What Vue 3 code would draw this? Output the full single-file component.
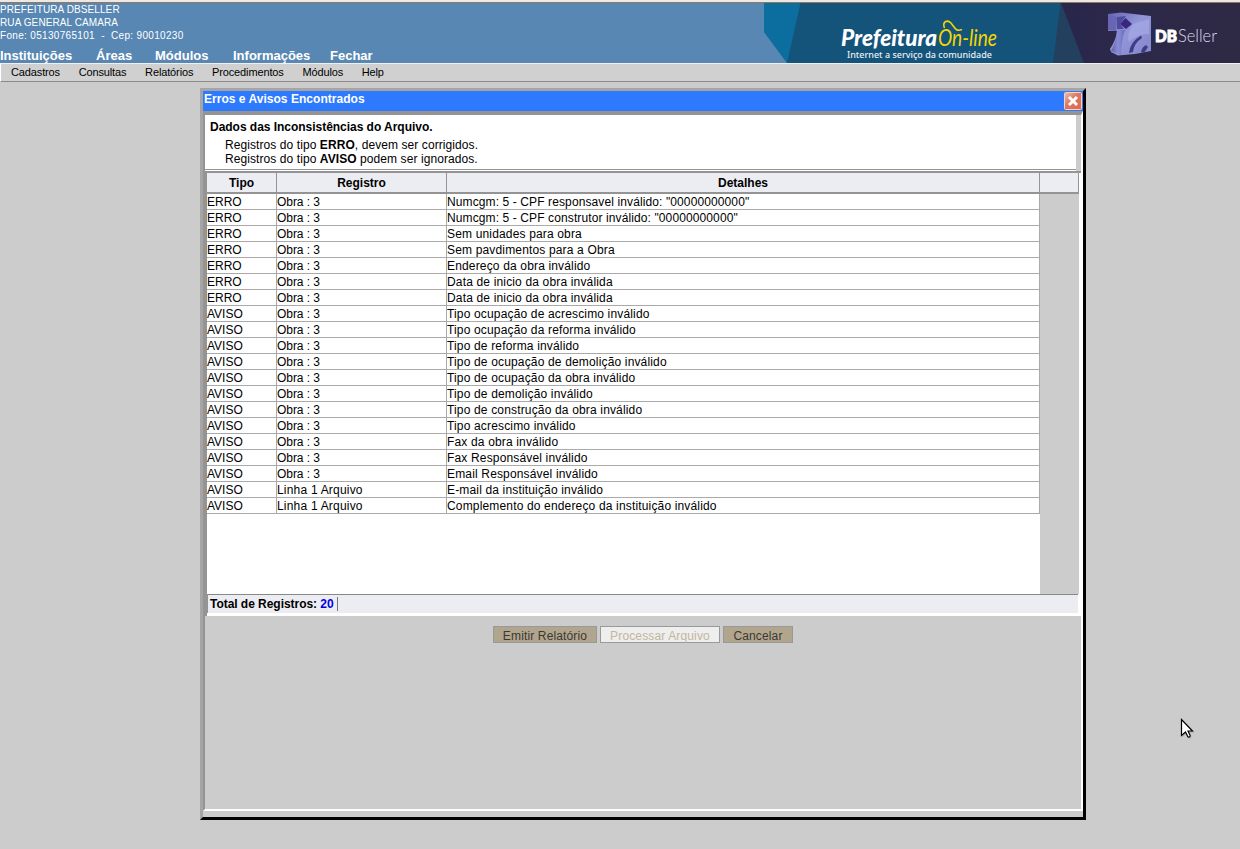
<script setup>
const modules = [
  { t: 'Instituições', x: 0 }, { t: 'Áreas', x: 96 }, { t: 'Módulos', x: 155 },
  { t: 'Informações', x: 233 }, { t: 'Fechar', x: 330 }
]
const menu = ['Cadastros', 'Consultas', 'Relatórios', 'Procedimentos', 'Módulos', 'Help']
const details = [
  'Numcgm: 5 - CPF responsavel inválido: "00000000000"',
  'Numcgm: 5 - CPF construtor inválido: "00000000000"',
  'Sem unidades para obra', 'Sem pavdimentos para a Obra', 'Endereço da obra inválido',
  'Data de inicio da obra inválida', 'Data de inicio da obra inválida',
  'Tipo ocupação de acrescimo inválido', 'Tipo ocupação da reforma inválido',
  'Tipo de reforma inválido', 'Tipo de ocupação de demolição inválido',
  'Tipo de ocupação da obra inválido', 'Tipo de demolição inválido',
  'Tipo de construção da obra inválido', 'Tipo acrescimo inválido', 'Fax da obra inválido',
  'Fax Responsável inválido', 'Email Responsável inválido',
  'E-mail da instituição inválido', 'Complemento do endereço da instituição inválido'
]
const rows = details.map((d, i) => ({
  tipo: i < 7 ? 'ERRO' : 'AVISO',
  registro: i < 18 ? 'Obra : 3' : 'Linha 1 Arquivo',
  d
}))
</script>

<template>
  <div class="page">
    <header class="top">
      <div class="info">
        <div class="org">
          <div class="name">PREFEITURA DBSELLER</div>
          <div class="name">RUA GENERAL CAMARA</div>
          <div class="phone">Fone: 05130765101&nbsp; -&nbsp; Cep: 90010230</div>
        </div>
        <svg class="modules" width="420" height="20">
          <text v-for="m in modules" :key="m.t" :x="m.x" y="16">{{ m.t }}</text>
        </svg>
      </div>
      <svg class="banner" width="476" height="60" viewBox="764 3 476 60">
        <defs>
          <linearGradient id="cube" x1="0" y1="0" x2="1" y2="1">
            <stop offset="0" stop-color="#6765b2" /><stop offset=".45" stop-color="#9295d8" /><stop offset="1" stop-color="#8587cc" />
          </linearGradient>
          <linearGradient id="stem" x1="0" y1="0" x2="1" y2="0">
            <stop offset="0" stop-color="#605eac" /><stop offset=".5" stop-color="#8a8dd4" /><stop offset="1" stop-color="#6c6cbb" />
          </linearGradient>
          <linearGradient id="dark" x1="0" y1="0" x2="1" y2="0">
            <stop offset="0" stop-color="#27264c" /><stop offset=".3" stop-color="#2c2849" /><stop offset="1" stop-color="#2e2944" />
          </linearGradient>
        </defs>
        <rect x="764" y="3" width="476" height="60" fill="#14547b" />
        <path d="M764 3H800.500L787 63L764 32Z" fill="#0b6e9f" />
        <path d="M764 32L787 63H764Z" fill="#5887b3" />
        <path d="M1060.500 3H1070L1084 63H1053Z" fill="#23405f" />
        <path d="M1061 3H1240V63H1084Z" fill="url(#dark)" />
        <text x="841" y="46" class="pref" textLength="96" lengthAdjust="spacingAndGlyphs">Prefeitura</text>
        <text x="938" y="46" class="online" textLength="59" lengthAdjust="spacingAndGlyphs">On-line</text>
        <path d="M944.500 28C942 22 947 19 951 23C955 28 956 32 962 29.500" fill="none" stroke="#f2d600" stroke-width="1.600" />
        <text x="847" y="57.500" class="slogan" textLength="145" lengthAdjust="spacingAndGlyphs">Internet a serviço da comunidade</text>
        <path d="M1108 14L1121 12.500L1151 16V51L1135 54L1118 55.500L1111 52L1110 49Q1116 40 1117 31L1108 31Z" fill="url(#cube)" />
        <path d="M1108 14L1117 17L1116 31L1108 30Z" fill="#6765b4" />
        <path d="M1117 17L1126 16L1120 24L1124 29L1117 29Z" fill="#4e4b9f" />
        <path d="M1120 24L1125.500 18L1132 24L1126 29Z" fill="#39277d" />
        <path d="M1117 30H1125Q1121 42 1121 55L1111 51Q1117 40 1117 30Z" fill="url(#stem)" />
        <path d="M1133 24L1149 19V34Q1137 34 1129 42Q1126 36 1133 24Z" fill="#abb1e7" opacity=".55" />
        <path d="M1129 53Q1130 42 1141 35.500L1142 38Q1134 43 1133 52ZM1141 52Q1142 47 1146 45L1148 47L1144 53Z" fill="#403b83" />
        <text x="1155" y="42" class="db" textLength="22" lengthAdjust="spacingAndGlyphs">DB</text>
        <text x="1178" y="42" class="seller" textLength="39" lengthAdjust="spacingAndGlyphs">Seller</text>
      </svg>
    </header>
    <nav class="menu"><span v-for="m in menu" :key="m">{{ m }}</span></nav>

    <section class="window">
      <div class="title">
        <span>Erros e Avisos Encontrados</span>
        <svg width="18" height="18" viewBox="0 0 18 18">
          <defs><linearGradient id="red" x1="0" y1="0" x2="1" y2="1"><stop offset="0" stop-color="#edc0b4" /><stop offset=".45" stop-color="#df765e" /><stop offset="1" stop-color="#e06a49" /></linearGradient></defs>
          <rect x=".5" y=".5" width="17" height="17" rx="1" fill="url(#red)" stroke="#eed3cf" />
          <path d="M5 5L13 13M13 5L5 13" stroke="#fff" stroke-width="3" />
        </svg>
      </div>
      <div class="frame">
        <div class="intro">
          <b>Dados das Inconsistências do Arquivo.</b>
          <p>Registros do tipo <b>ERRO</b>, devem ser corrigidos.<br>Registros do tipo <b>AVISO</b> podem ser ignorados.</p>
        </div>
        <div class="grid">
          <div class="head"><div>Tipo</div><div>Registro</div><div>Detalhes</div><div></div></div>
          <div class="body">
            <div class="rows">
              <div v-for="(r, i) in rows" :key="i" class="row"><div>{{ r.tipo }}</div><div :class="i > 17 ? 'line' : 'obra'">{{ r.registro }}</div><div :class="['detail', { code: i < 2 }]">{{ r.d }}</div></div>
            </div>
          </div>
          <div class="foot"><span>Total de Registros: <i>20</i></span></div>
        </div>
        <div class="actions">
          <button class="emit">Emitir Relatório</button>
          <button class="proc" disabled>Processar Arquivo</button>
          <button class="cancel">Cancelar</button>
        </div>
      </div>
    </section>
    <svg class="cursor" width="16" height="24" viewBox="0 0 16 24">
      <path d="M1.500 1.500V18L5.500 14.500L8 19.500Q10 20 10.500 18L8.500 13.500H13Z" fill="#666" opacity=".35" transform="translate(1 1)" />
      <path d="M1.500 1.500V17.500L5.500 14L8 19Q10 19.500 10.200 17.500L8 13H12.500Z" fill="#fff" stroke="#000" stroke-width="1.200" />
    </svg>
  </div>
</template>

<style>
body { margin: 0; background: #ccc; overflow: hidden; }
</style>
<style scoped>
* { box-sizing: border-box; }
.page { width: 1240px; height: 849px; background: #ccc; font: 12px/14px "Liberation Sans", Arial, sans-serif; color: #000; position: relative; overflow: hidden; }
.top { height: 63px; background: #5887b3; border-top: 2px solid #ece9e4; box-shadow: inset 0 1px #94775c; display: flex; justify-content: space-between; padding-top: 1px; }
.info { display: flex; flex-direction: column; justify-content: space-between; height: 60px; }
.org { font-size: 10px; line-height: 13px; color: #fff; }
.name { letter-spacing: .1px; }
.phone { letter-spacing: .32px; }
.modules { display: block; margin-bottom: -1px; }
.modules text { font: bold 13px "Liberation Sans", Arial, sans-serif; fill: #fff; }
.banner { display: block; }
.pref { font: italic 900 22px "Lato", sans-serif; fill: #fff; }
.online { font: italic 400 23px "Lato", sans-serif; fill: #f2d600; }
.slogan { font: 500 9.500px "Noto Sans", sans-serif; fill: #e8eff4; }
.db { font: 900 17px "Lato", sans-serif; fill: #fff; stroke: #fff; stroke-width: 1px; }
.seller { font: 300 18px "Lato", sans-serif; fill: #ddd9ec; }
.menu { height: 19px; background: #d0d0d0; border-top: 1px solid #f0f0f0; border-left: 1px solid #fff; border-bottom: 1px solid #8b8b8b; display: flex; gap: 18.700px; padding: 2px 0 0 10px; font-size: 11px; line-height: 13px; letter-spacing: -.13px; }
.window { margin: 6px 0 0 200px; width: 886px; height: 732px; border: 3px solid #000; border-top-color: #a5a5a5; border-left-color: #a5a5a5; }
.title { height: 20px; background: #2d7aff; display: flex; justify-content: space-between; color: #fff; font-weight: bold; padding: 1px 1px 0; line-height: 14px; letter-spacing: .03px; }
.frame { height: 700px; border: 2px solid #fff; border-top: 4px solid #949494; border-left-color: #949494; }
.intro { height: 56px; border-right: 5px solid #ccc; background: #fff; padding: 5px 0 0 5px; box-shadow: inset 0 -1px #fff, inset 0 -2px #949494; letter-spacing: -.03px; }
.intro p { margin: 4px 0 0 15px; letter-spacing: .08px; }
.grid { height: 445px; background: #fff; border-top: 2px solid #949494; border-left: 2px solid #949494; padding-right: 2px; }
.head { height: 21px; display: grid; grid-template-columns: 70px 170px 593px 39px; background: #ecedf2; border-bottom: 2px solid #949494; font-weight: bold; text-align: center; line-height: 20px; }
.head div { border-right: 1px solid #949494; }
.body { height: 400px; background: #ccc; padding-right: 39px; }
.rows { background: #fff; height: 400px; }
.row { display: grid; grid-template-columns: 70px 170px 593px; height: 16px; line-height: 16px; }
.row div { height: 16px; border-right: 1px solid #aaa; border-bottom: 1px solid #aaa; white-space: nowrap; }
.row .line { letter-spacing: .2px; }
.row .obra { letter-spacing: -.06px; }
.row .detail { letter-spacing: .16px; }
.row .code { letter-spacing: .11px; }
.foot { height: 19px; width: 871px; background: #ecedf2; border-top: 1px solid #888; border-left: 1px solid #949494; font-weight: bold; padding: 2px 0 0 2px; letter-spacing: -.04px; }
.foot span { display: inline-block; border-right: 1px solid #777; padding-right: 3px; height: 14px; }
.foot i { font-style: normal; color: #00d; }
.actions { height: 193px; background: #ccc; display: flex; justify-content: center; gap: 3px; padding-top: 10px; }
.actions button { height: 17px; padding: 2px 0 0; border: 1px solid #999; background: #b2a58e; color: #3c3831; font: 12px/15px "Liberation Sans", Arial, sans-serif; letter-spacing: .14px; white-space: nowrap; }
.actions .emit { width: 104px; }
.actions .proc { width: 120px; background: #eee; color: #c2b69d; }
.actions .cancel { width: 70px; }
.cursor { position: absolute; left: 1180px; top: 718px; }
</style>
